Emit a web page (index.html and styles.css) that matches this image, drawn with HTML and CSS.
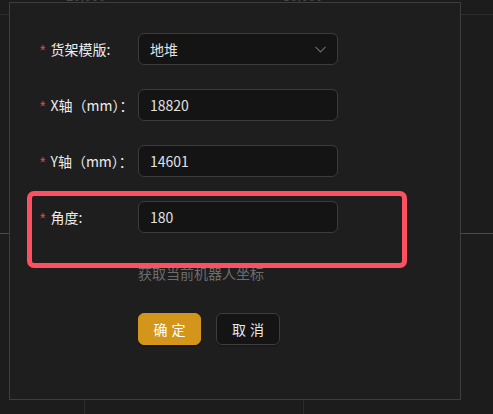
FILE: index.html
```html
<!DOCTYPE html>
<html lang="zh-CN">
<head>
<meta charset="utf-8">
<title>货架设置</title>
<link rel="stylesheet" href="styles.css">
</head>
<body>
<div class="canvas">
  <span class="axis-label axis-a">10,000</span>
  <span class="axis-label axis-b">50,000</span>
  <div class="hline hline-top"></div>
  <div class="hline hline-mid"></div>
  <div class="vline vline-a"></div>
  <div class="vline vline-b"></div>
</div>

<div class="dialog">
  <form class="form">
    <div class="row">
      <label class="label"><span class="req">*</span>货架模版:</label>
      <div class="control select">
        <span class="value">地堆</span>
        <svg class="chev" width="11" height="7" viewBox="0 0 11 7"><path d="M0.5 0.8 L5.5 5.8 L10.5 0.8" fill="none" stroke="#6a6a6a" stroke-width="1.2"/></svg>
      </div>
    </div>
    <div class="row">
      <label class="label"><span class="req">*</span>X轴（mm）：</label>
      <div class="control"><span class="value">18820</span></div>
    </div>
    <div class="row">
      <label class="label"><span class="req">*</span>Y轴（mm）：</label>
      <div class="control"><span class="value">14601</span></div>
    </div>
    <div class="row row-last">
      <label class="label"><span class="req">*</span>角度:</label>
      <div class="control"><span class="value">180</span></div>
    </div>
    <div class="help">获取当前机器人坐标</div>
    <div class="actions">
      <button type="button" class="btn btn-primary">确定</button>
      <button type="button" class="btn btn-default">取消</button>
    </div>
  </form>
  <div class="highlight"></div>
</div>
</body>
</html>
```
FILE: styles.css
```css
html, body {
  margin: 0;
  padding: 0;
}
body {
  width: 493px;
  height: 414px;
  overflow: hidden;
  background: #1c1c1c;
  font-family: "Noto Sans CJK SC", "Noto Sans", sans-serif;
  font-size: 14px;
  position: relative;
}
.canvas {
  position: absolute;
  inset: 0;
}
.axis-label {
  position: absolute;
  top: -10px;
  font-size: 13px;
  line-height: 14px;
  color: #4a4a4a;
  font-family: "Liberation Sans", sans-serif;
}
.axis-a { left: 66px; }
.axis-b { left: 283px; }
.hline {
  position: absolute;
  left: 0;
  right: 0;
  height: 1px;
}
.hline-top { top: 14px; background: #2c2c2c; }
.hline-mid { top: 233px; background: #4a4a4a; }
.vline {
  position: absolute;
  top: 400px;
  bottom: 0;
  width: 1px;
  background: #2a2a2a;
}
.vline-a { left: 84px; }
.vline-b { left: 303px; }

.dialog {
  position: absolute;
  left: 9px;
  top: 2px;
  width: 450px;
  height: 396px;
  border: 1px solid #3e3e3e;
  background: #1e1e1e;
}
.form {
  padding: 30px 0 0 30px;
  margin: 0;
}
.row {
  display: flex;
  align-items: center;
  height: 32px;
  margin-bottom: 24px;
}
.row-last { margin-bottom: 0; }
.label {
  width: 98px;
  flex: none;
  color: #ececec;
  white-space: nowrap;
  line-height: 22px;
}
.req {
  color: #e34d4d;
  font-family: "Liberation Sans", sans-serif;
  font-size: 14px;
  margin-right: 5px;
}
.control {
  box-sizing: border-box;
  width: 200px;
  height: 32px;
  border: 1px solid #3b3b3b;
  border-radius: 6px;
  background: #141414;
  display: flex;
  align-items: center;
  padding: 0 11px;
  color: #e2e2e2;
}
.select {
  justify-content: space-between;
}
.chev {
  margin-right: 0;
  margin-top: 1px;
}
.help {
  margin-top: 29px;
  padding-left: 98px;
  line-height: 22px;
  color: #6c6c6c;
}
.actions {
  display: flex;
  gap: 15px;
  margin-top: 29px;
  padding-left: 98px;
}
.btn {
  box-sizing: border-box;
  height: 32px;
  width: 63px;
  border-radius: 6px;
  font-family: "Noto Sans CJK SC", sans-serif;
  font-size: 14px;
  letter-spacing: 4px;
  padding: 0 0 0 4px;
  cursor: pointer;
}
.btn-primary {
  background: #d4961a;
  border: 1px solid #d4961a;
  color: #ffffff;
  box-shadow: 0 2px 0 rgba(0, 0, 0, 0.25);
}
.btn-default {
  width: 64px;
  background: #141414;
  border: 1px solid #3d3d3d;
  color: #e8e8e8;
  box-shadow: 0 2px 0 rgba(0, 0, 0, 0.2);
}
.highlight {
  position: absolute;
  left: 17px;
  top: 188px;
  width: 370px;
  height: 67px;
  border: 5px solid #ff5062;
  border-radius: 7px;
  pointer-events: none;
}
```
